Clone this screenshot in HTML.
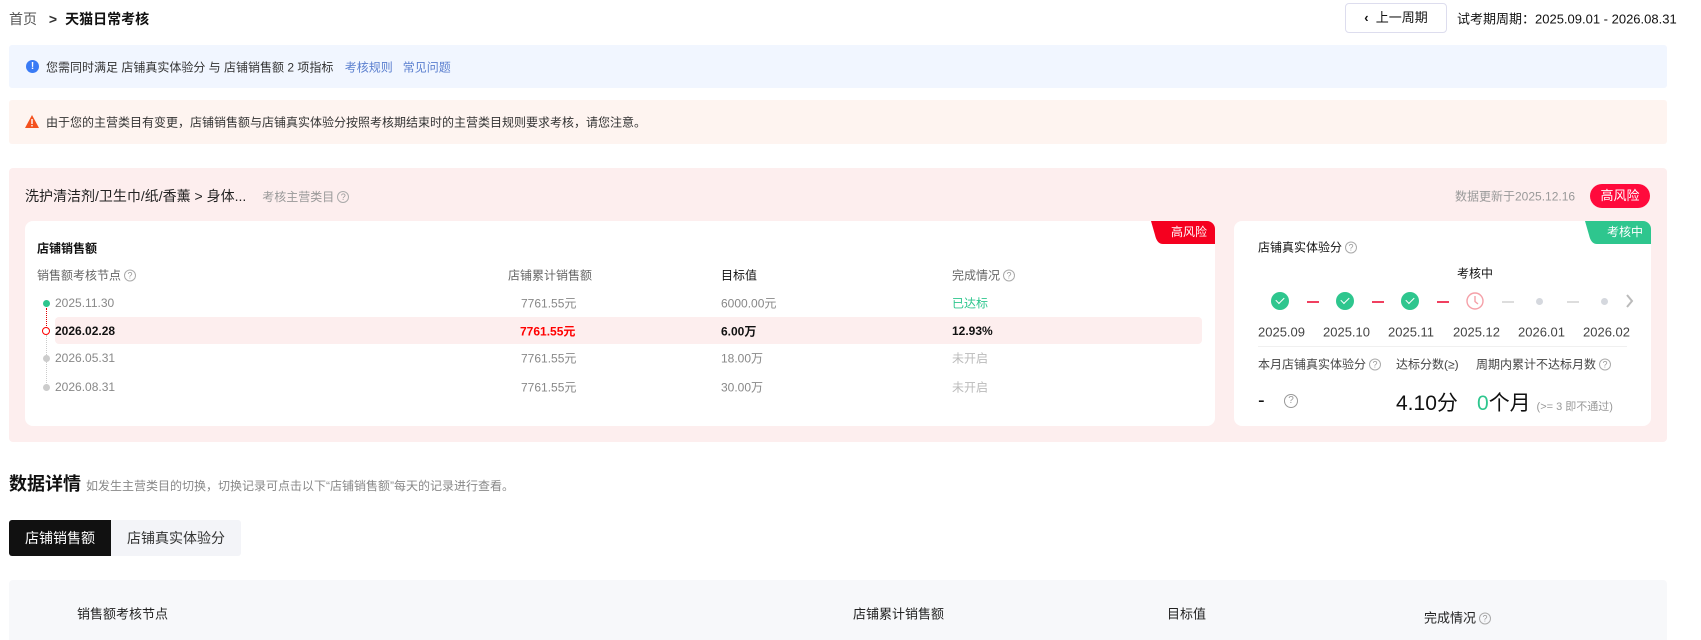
<!DOCTYPE html>
<html><head><meta charset="utf-8"><style>
*{margin:0;padding:0;box-sizing:border-box}
body{width:1701px;height:640px;overflow:hidden;background:#fff;font-family:"Liberation Sans","Noto Sans CJK SC",sans-serif;color:#111;font-size:13px;position:relative}
.a{position:absolute;white-space:nowrap}
.q{display:inline-block;width:12px;height:12px;border:1px solid #aaa;border-radius:50%;font-size:9px;line-height:10px;text-align:center;color:#999;vertical-align:1px;margin-left:3px}
.g{color:#888}
.vc{transform:translateY(-50%)}
.dot{position:absolute;width:7px;height:7px;border-radius:50%}
.ck{position:absolute;width:18px;height:18px;border-radius:50%;background:#2ec68e;top:292px}
.ck:after{content:"";position:absolute;left:5px;top:5px;width:7px;height:4px;border-left:1.6px solid #fff;border-bottom:1.6px solid #fff;transform:rotate(-45deg)}
.ds{position:absolute;top:301px;width:12px;height:1.5px}
</style></head><body>
<div class="a vc" style="left:9px;top:19px;font-size:14px;color:#555">首页 <b style="margin:0 8px;color:#333">&gt;</b><b style="color:#111">天猫日常考核</b></div>
<div class="a" style="left:1345px;top:3px;width:102px;height:30px;border:1px solid #dde;border-radius:4px;font-size:13px;line-height:28px;text-align:center"><b>‹</b>&nbsp; 上一周期</div>
<div class="a vc" style="left:1457px;top:18px;font-size:13px">试考期周期：2025.09.01 - 2026.08.31</div>

<div class="a" style="left:9px;top:45px;width:1658px;height:43px;background:#f1f6ff;border-radius:3px"></div>
<div class="a" style="left:26px;top:60px;width:13px;height:13px;border-radius:50%;background:#3a7bf5;color:#fff;font-size:10px;line-height:13px;text-align:center;font-weight:bold">!</div>
<div class="a vc" style="left:46px;top:67px;font-size:12px;color:#333">您需同时满足 店铺真实体验分 与 店铺销售额 2 项指标 <span style="color:#5b7fcf;margin-left:8px">考核规则</span><span style="color:#5b7fcf;margin-left:10px">常见问题</span></div>

<div class="a" style="left:9px;top:100px;width:1658px;height:44px;background:#fef4f0;border-radius:3px"></div>
<svg class="a" style="left:25px;top:115px" width="14" height="13"><path d="M7 0L14 13H0Z" fill="#f4511e"/><rect x="6.3" y="4" width="1.4" height="5" fill="#fff"/><rect x="6.3" y="10" width="1.4" height="1.4" fill="#fff"/></svg>
<div class="a vc" style="left:46px;top:122px;font-size:12px;color:#333">由于您的主营类目有变更，店铺销售额与店铺真实体验分按照考核期结束时的主营类目规则要求考核，请您注意。</div>

<div class="a" style="left:9px;top:168px;width:1658px;height:274px;background:#fdeeee;border-radius:4px"></div>
<div class="a vc" style="left:25px;top:196px;font-size:14px;color:#222">洗护清洁剂/卫生巾/纸/香薰 &gt; 身体... <span style="font-size:12px;color:#999;margin-left:12px">考核主营类目<span class="q">?</span></span></div>
<div class="a vc" style="left:1455px;top:196px;font-size:12px;color:#999">数据更新于2025.12.16</div>
<div class="a" style="left:1590px;top:184px;width:60px;height:24px;border-radius:12px;background:#ff0a3c;color:#fff;font-size:13px;line-height:24px;text-align:center">高风险</div>

<div class="a" style="left:25px;top:221px;width:1190px;height:205px;background:#fff;border-radius:8px;overflow:hidden">
<svg class="a" style="right:0;top:0" width="64" height="23"><path d="M0 0H64V23H12Q6 23 4 14L0 0Z" fill="#f5001f"/></svg>
<div class="a" style="right:8px;top:0;height:23px;color:#fff;font-size:12px;line-height:23px">高风险</div>
</div>
<div class="a vc" style="left:37px;top:248px;font-size:12px;font-weight:bold">店铺销售额</div>
<div class="a vc" style="left:37px;top:275px;font-size:12px;color:#666">销售额考核节点<span class="q">?</span></div>
<div class="a vc" style="left:508px;top:275px;font-size:12px;color:#666">店铺累计销售额</div>
<div class="a vc" style="left:721px;top:275px;font-size:12px;color:#111">目标值</div>
<div class="a vc" style="left:952px;top:275px;font-size:12px;color:#666">完成情况<span class="q">?</span></div>
<div class="a" style="left:55px;top:317px;width:1147px;height:27px;background:#fdeeee;border-radius:4px"></div>
<div class="a" style="left:46px;top:308px;height:20px;border-left:1px dotted #d00"></div>
<div class="a" style="left:46px;top:335px;height:50px;border-left:1px dotted #ccc"></div>
<div class="dot" style="left:43px;top:300px;background:#2ec68e"></div>
<div class="dot" style="left:42px;top:327px;width:8px;height:8px;border:1.3px solid #f00;background:#fff"></div>
<div class="dot" style="left:43px;top:355px;background:#ccc"></div>
<div class="dot" style="left:43px;top:384px;background:#ccc"></div>
<div class="a vc g" style="left:55px;top:303px;font-size:12px">2025.11.30</div>
<div class="a vc g" style="left:521px;top:303px;font-size:12px">7761.55元</div>
<div class="a vc g" style="left:721px;top:303px;font-size:12px">6000.00元</div>
<div class="a vc" style="left:952px;top:303px;font-size:12px;color:#2ec68e">已达标</div>
<div class="a vc" style="left:55px;top:331px;font-size:12px;font-weight:bold">2026.02.28</div>
<div class="a vc" style="left:520px;top:331px;font-size:12px;font-weight:bold;color:#f00">7761.55元</div>
<div class="a vc" style="left:721px;top:331px;font-size:12px;font-weight:bold">6.00万</div>
<div class="a vc" style="left:952px;top:331px;font-size:12px;font-weight:bold">12.93%</div>
<div class="a vc g" style="left:55px;top:358px;font-size:12px">2026.05.31</div>
<div class="a vc g" style="left:521px;top:358px;font-size:12px">7761.55元</div>
<div class="a vc g" style="left:721px;top:358px;font-size:12px">18.00万</div>
<div class="a vc" style="left:952px;top:358px;font-size:12px;color:#bbb">未开启</div>
<div class="a vc g" style="left:55px;top:387px;font-size:12px">2026.08.31</div>
<div class="a vc g" style="left:521px;top:387px;font-size:12px">7761.55元</div>
<div class="a vc g" style="left:721px;top:387px;font-size:12px">30.00万</div>
<div class="a vc" style="left:952px;top:387px;font-size:12px;color:#bbb">未开启</div>

<div class="a" style="left:1234px;top:221px;width:417px;height:205px;background:#fff;border-radius:8px;overflow:hidden">
<svg class="a" style="right:0;top:0" width="66" height="23"><path d="M0 0H66V23H12Q6 23 4 14L0 0Z" fill="#2ec68e"/></svg>
<div class="a" style="right:8px;top:0;height:23px;color:#fff;font-size:12px;line-height:23px">考核中</div>
</div>
<div class="a vc" style="left:1258px;top:247px;font-size:12px">店铺真实体验分<span class="q">?</span></div>
<div class="a vc" style="left:1475px;top:273px;font-size:12px;transform:translate(-50%,-50%)">考核中</div>
<div class="ck" style="left:1271px"></div><div class="ck" style="left:1336px"></div><div class="ck" style="left:1401px"></div>
<div class="ds" style="left:1307px;background:#f04060"></div><div class="ds" style="left:1372px;background:#f04060"></div><div class="ds" style="left:1437px;background:#f04060"></div>
<div class="ds" style="left:1502px;background:#ddd"></div><div class="ds" style="left:1567px;background:#ddd"></div>
<svg class="a" style="left:1466px;top:292px" width="18" height="18"><circle cx="9" cy="9" r="8" fill="none" stroke="#f5a0a8" stroke-width="1.4"/><path d="M9 4V9.5L12 12" fill="none" stroke="#f5a0a8" stroke-width="1.4"/></svg>
<div class="dot" style="left:1536px;top:298px;background:#d5d8de"></div>
<div class="dot" style="left:1601px;top:298px;background:#d5d8de"></div>
<svg class="a" style="left:1626px;top:294px" width="8" height="14"><path d="M1 1L6 7L1 13" fill="none" stroke="#bbb" stroke-width="2"/></svg>
<div class="a vc" style="left:1258px;top:332px;font-size:13px;color:#444">2025.09</div>
<div class="a vc" style="left:1323px;top:332px;font-size:13px;color:#444">2025.10</div>
<div class="a vc" style="left:1388px;top:332px;font-size:13px;color:#444">2025.11</div>
<div class="a vc" style="left:1453px;top:332px;font-size:13px;color:#444">2025.12</div>
<div class="a vc" style="left:1518px;top:332px;font-size:13px;color:#444">2026.01</div>
<div class="a vc" style="left:1583px;top:332px;font-size:13px;color:#444">2026.02</div>
<div class="a" style="left:1258px;top:346px;width:369px;height:1px;background:#f0f0f0"></div>
<div class="a vc" style="left:1258px;top:364px;font-size:12px;color:#444">本月店铺真实体验分<span class="q">?</span></div>
<div class="a vc" style="left:1396px;top:364px;font-size:12px;color:#444">达标分数(≥)</div>
<div class="a vc" style="left:1476px;top:364px;font-size:12px;color:#444">周期内累计不达标月数<span class="q">?</span></div>
<div class="a vc" style="left:1258px;top:401px;font-size:20px">-</div>
<div class="a" style="left:1284px;top:394px;width:14px;height:14px;border:1.3px solid #999;border-radius:50%;font-size:10px;line-height:12px;text-align:center;color:#999">?</div>
<div class="a vc" style="left:1396px;top:402px;font-size:21px">4.10分</div>
<div class="a vc" style="left:1477px;top:402px;font-size:21px"><span style="color:#2ec68e">0</span>个月 <span style="font-size:11px;color:#999">(&gt;= 3 即不通过)</span></div>

<div class="a vc" style="left:9px;top:483px;font-size:18px;font-weight:bold">数据详情 <span style="font-size:12px;font-weight:normal;color:#888;margin-left:0px">如发生主营类目的切换，切换记录可点击以下“店铺销售额”每天的记录进行查看。</span></div>
<div class="a" style="left:9px;top:520px;width:232px;height:36px;background:#f3f4f8;border-radius:3px"></div>
<div class="a" style="left:9px;top:520px;width:102px;height:36px;background:#111;color:#fff;border-radius:3px 0 0 3px;font-size:14px;line-height:36px;text-align:center">店铺销售额</div>
<div class="a" style="left:111px;top:520px;width:130px;height:36px;color:#333;font-size:14px;line-height:36px;text-align:center">店铺真实体验分</div>
<div class="a" style="left:9px;top:580px;width:1658px;height:60px;background:#f7f8fa;border-radius:4px 4px 0 0"></div>
<div class="a vc" style="left:77px;top:613px;font-size:13px;color:#222">销售额考核节点</div>
<div class="a vc" style="left:853px;top:613px;font-size:13px;color:#222">店铺累计销售额</div>
<div class="a vc" style="left:1167px;top:613px;font-size:13px;color:#222">目标值</div>
<div class="a vc" style="left:1424px;top:617px;font-size:13px;color:#222">完成情况<span class="q">?</span></div>
</body></html>
